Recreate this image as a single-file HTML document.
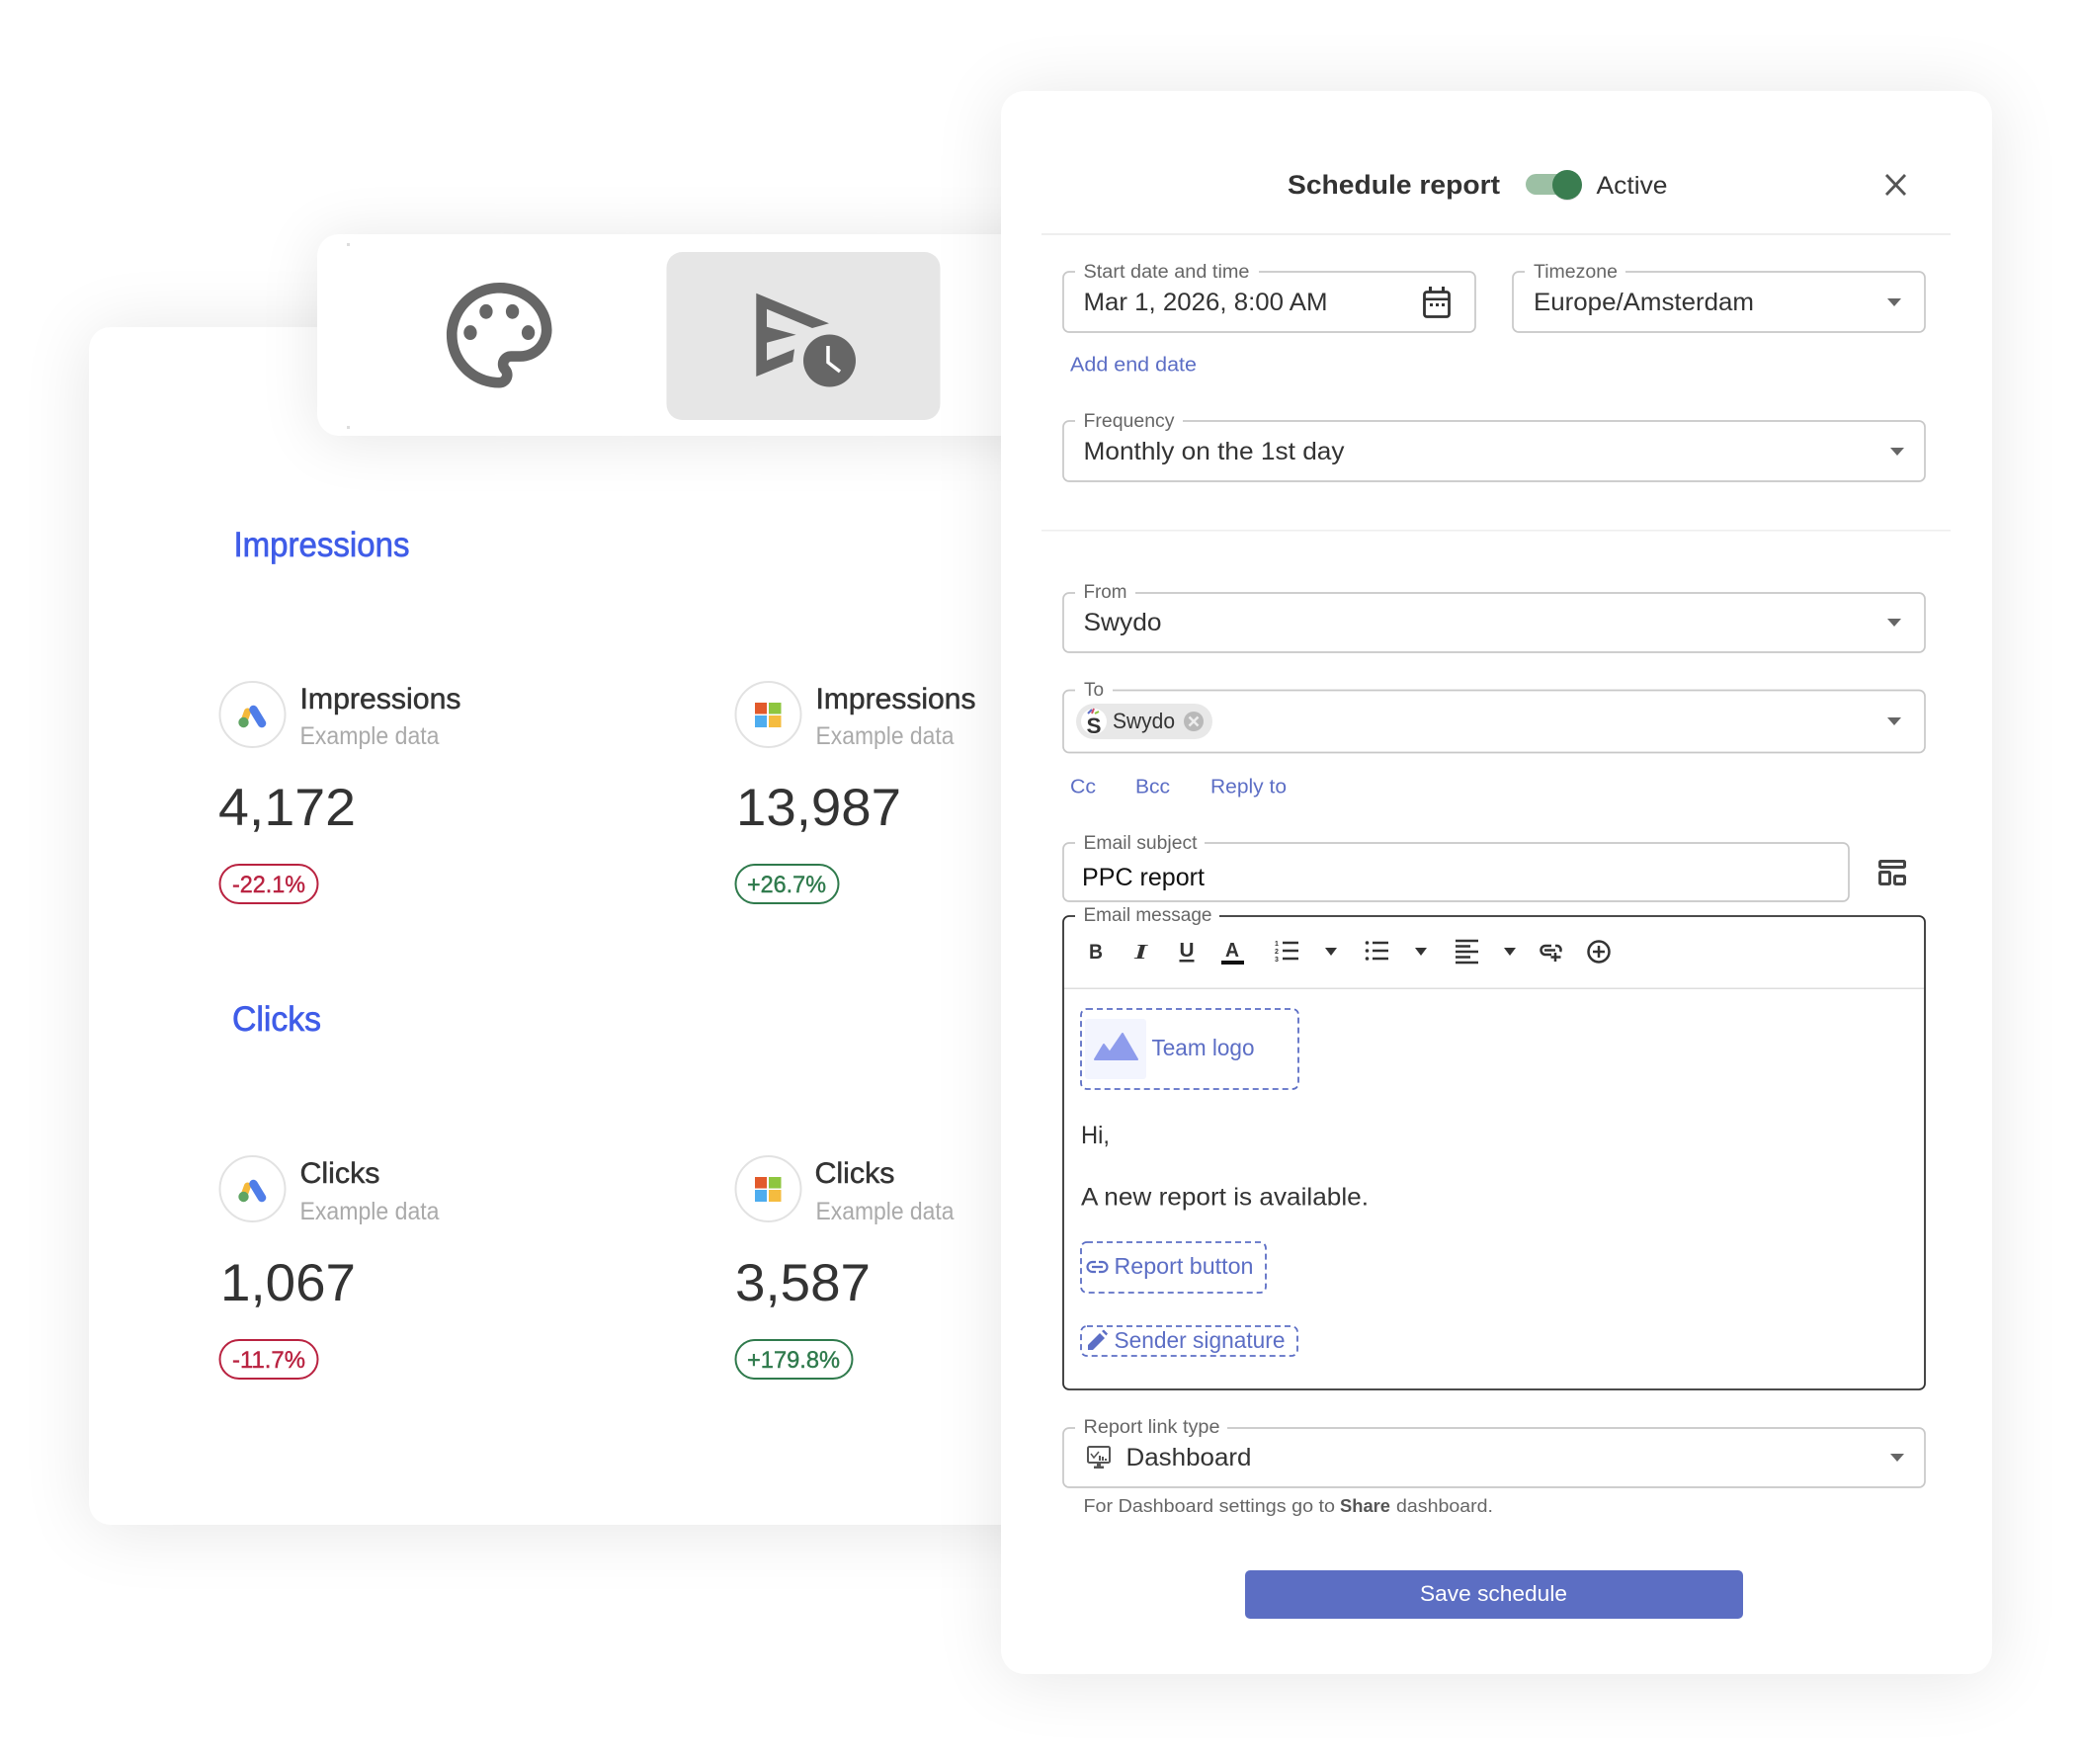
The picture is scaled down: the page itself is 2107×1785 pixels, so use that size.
<!DOCTYPE html>
<html lang="en">
<head>
<meta charset="utf-8">
<title>Schedule report</title>
<style>
html,body{margin:0;padding:0;background:#fff;width:2107px;height:1785px;overflow:hidden}
.c{position:absolute;background:#fff}
svg{position:absolute;left:0;top:0}
text{font-family:"Liberation Sans",sans-serif;fill:#333}
.lab{font-size:19px;fill:#666}
.val{font-size:25px;fill:#333}
.lnk{font-size:20px;fill:#5c6ec5}
.ph{font-size:23px;fill:#5c6ec5}
.h{font-size:35px;fill:#3f5ce8;stroke:#3f5ce8;stroke-width:.7px}
.it{font-size:30px;fill:#333;stroke:#333;stroke-width:.5px}
.ex{font-size:25px;fill:#aaa}
.num{font-size:53px;fill:#333}
.red{font-size:24px;fill:#b92240;stroke:#b92240;stroke-width:.4px}
.grn{font-size:24px;fill:#2f7a4c;stroke:#2f7a4c;stroke-width:.4px}
.f{fill:none;stroke:#c8c8c8;stroke-width:1.7}
.w{fill:#fff}
.d{fill:none;stroke:#5c6ec5;stroke-width:1.8;stroke-dasharray:6 4}
.ar{fill:#666}
.tl{stroke:#333;stroke-width:2.5;fill:none}
</style>
</head>
<body>
<div class="c" style="left:90px;top:331px;width:1100px;height:1212px;border-radius:22px;box-shadow:0 4px 70px rgba(0,0,0,.1)"></div>
<div class="c" style="left:321px;top:237px;width:800px;height:204px;border-radius:22px;box-shadow:0 4px 60px rgba(0,0,0,.1)"></div>
<div class="c" style="left:1013px;top:92px;width:1003px;height:1602px;border-radius:24px;box-shadow:0 4px 70px rgba(0,0,0,.1)"></div>

<svg width="2107" height="1785" viewBox="0 0 2107 1785" xmlns="http://www.w3.org/2000/svg">
<!-- toolbar -->
<rect x="351" y="246" width="3" height="3" fill="#ddd"/>
<rect x="351" y="431" width="3" height="3" fill="#ddd"/>
<rect x="674.500" y="255" width="277" height="170" rx="16" fill="#e6e6e6"/>
<g transform="translate(441.3 275.3) scale(5.33)" fill="#666">
<path d="M12 22C6.49 22 2 17.51 2 12S6.49 2 12 2s10 4.04 10 9c0 3.31-2.69 6-6 6h-1.77c-.28 0-.5.22-.5.5 0 .12.05.23.13.33.41.47.64 1.06.64 1.67 0 1.38-1.12 2.5-2.5 2.5zm0-18c-4.41 0-8 3.59-8 8s3.59 8 8 8c.28 0 .5-.22.5-.5 0-.16-.08-.28-.14-.35-.41-.46-.63-1.05-.63-1.65 0-1.38 1.12-2.5 2.5-2.5H16c2.21 0 4-1.79 4-4 0-3.86-3.59-7-8-7z"/>
<ellipse cx="6.5" cy="11.5" rx="1.25" ry="1.4"/><ellipse cx="9.5" cy="7.5" rx="1.25" ry="1.4"/><ellipse cx="14.5" cy="7.5" rx="1.25" ry="1.4"/><ellipse cx="17.5" cy="11.5" rx="1.25" ry="1.4"/>
</g>
<path fill="#666" d="M765.3 296.7L839 327.3L822 332L776 312.7V330.7L805.6 338.7L776 346.700V364.7L804 353.3L802.2 366L765.3 381Z"/>
<circle cx="839.5" cy="365" r="26.5" fill="#666"/>
<path d="M838 350V366.7L850 376" fill="none" stroke="#fff" stroke-width="3.500"/>

<!-- left content -->
<text class="h" x="236.500" y="563" textLength="178" lengthAdjust="spacingAndGlyphs">Impressions</text>
<text class="h" x="235" y="1043" textLength="90" lengthAdjust="spacingAndGlyphs">Clicks</text>

<g>
<circle cx="255.5" cy="723" r="33" fill="#fff" stroke="#e2e2e2" stroke-width="2"/>
<line x1="250.500" y1="720" x2="246.500" y2="731" stroke="#f5b93a" stroke-width="7" stroke-linecap="round"/>
<line x1="256.500" y1="718" x2="265" y2="732" stroke="#4f7de8" stroke-width="8.500" stroke-linecap="round"/>
<circle cx="246.5" cy="731" r="5.2" fill="#5fa463"/>
</g>
<g>
<circle cx="777.5" cy="723" r="33" fill="#fff" stroke="#e2e2e2" stroke-width="2"/>
<rect x="764" y="711" width="12" height="11.500" fill="#e25a2b"/>
<rect x="778" y="711" width="12.500" height="11.500" fill="#8ec63f"/>
<rect x="764" y="724" width="12" height="12" fill="#4eadef"/>
<rect x="778" y="724" width="12.500" height="12" fill="#f5bc3f"/>
</g>
<g transform="translate(0 480)">
<circle cx="255.5" cy="723" r="33" fill="#fff" stroke="#e2e2e2" stroke-width="2"/>
<line x1="250.500" y1="720" x2="246.500" y2="731" stroke="#f5b93a" stroke-width="7" stroke-linecap="round"/>
<line x1="256.500" y1="718" x2="265" y2="732" stroke="#4f7de8" stroke-width="8.500" stroke-linecap="round"/>
<circle cx="246.5" cy="731" r="5.2" fill="#5fa463"/>
<circle cx="777.5" cy="723" r="33" fill="#fff" stroke="#e2e2e2" stroke-width="2"/>
<rect x="764" y="711" width="12" height="11.500" fill="#e25a2b"/>
<rect x="778" y="711" width="12.500" height="11.500" fill="#8ec63f"/>
<rect x="764" y="724" width="12" height="12" fill="#4eadef"/>
<rect x="778" y="724" width="12.500" height="12" fill="#f5bc3f"/>
</g>

<text class="it" x="303.500" y="717" textLength="163" lengthAdjust="spacingAndGlyphs">Impressions</text>
<text class="ex" x="303.500" y="753" textLength="141" lengthAdjust="spacingAndGlyphs">Example data</text>
<text class="num" x="221" y="835" textLength="139" lengthAdjust="spacingAndGlyphs">4,172</text>
<rect x="222.500" y="875" width="99" height="39" rx="19.500" fill="none" stroke="#b92240" stroke-width="2"/>
<text class="red" x="235" y="903" textLength="74" lengthAdjust="spacingAndGlyphs">-22.1%</text>

<text class="it" x="825.500" y="717" textLength="162" lengthAdjust="spacingAndGlyphs">Impressions</text>
<text class="ex" x="825.500" y="753" textLength="140" lengthAdjust="spacingAndGlyphs">Example data</text>
<text class="num" x="745" y="835" textLength="167" lengthAdjust="spacingAndGlyphs">13,987</text>
<rect x="744.500" y="875" width="104" height="39" rx="19.500" fill="none" stroke="#2f7a4c" stroke-width="2"/>
<text class="grn" x="756" y="903" textLength="80" lengthAdjust="spacingAndGlyphs">+26.7%</text>

<text class="it" x="303.500" y="1197" textLength="81" lengthAdjust="spacingAndGlyphs">Clicks</text>
<text class="ex" x="303.500" y="1234" textLength="141" lengthAdjust="spacingAndGlyphs">Example data</text>
<text class="num" x="223" y="1316" textLength="137" lengthAdjust="spacingAndGlyphs">1,067</text>
<rect x="222.500" y="1356" width="99" height="39" rx="19.500" fill="none" stroke="#b92240" stroke-width="2"/>
<text class="red" x="235" y="1384" textLength="74" lengthAdjust="spacingAndGlyphs">-11.7%</text>

<text class="it" x="824.500" y="1197" textLength="81" lengthAdjust="spacingAndGlyphs">Clicks</text>
<text class="ex" x="825.500" y="1234" textLength="140" lengthAdjust="spacingAndGlyphs">Example data</text>
<text class="num" x="744" y="1316" textLength="137" lengthAdjust="spacingAndGlyphs">3,587</text>
<rect x="744.500" y="1356" width="118" height="39" rx="19.500" fill="none" stroke="#2f7a4c" stroke-width="2"/>
<text class="grn" x="756" y="1384" textLength="94" lengthAdjust="spacingAndGlyphs">+179.8%</text>

<!-- modal header -->
<text x="1303" y="196" font-size="27" font-weight="700" textLength="215" lengthAdjust="spacingAndGlyphs">Schedule report</text>
<rect x="1544" y="176" width="50" height="21" rx="10.500" fill="#9cc0a4"/>
<circle cx="1586" cy="188" r="15" fill="#000" opacity=".12"/>
<circle cx="1586" cy="187" r="15" fill="#3a7d50"/>
<text x="1615.500" y="196" font-size="25" textLength="72" lengthAdjust="spacingAndGlyphs">Active</text>
<path d="M1909 177L1928 197M1928 177L1909 197" stroke="#555" stroke-width="2.800" fill="none"/>
<rect x="1054" y="236" width="920" height="2" fill="#eee"/>

<!-- date fields -->
<rect class="f" x="1076" y="275" width="417" height="61" rx="6"/>
<rect class="w" x="1088" y="270" width="186" height="10"/>
<text class="lab" x="1096.500" y="281" textLength="168" lengthAdjust="spacingAndGlyphs">Start date and time</text>
<text class="val" x="1096.500" y="314" textLength="247" lengthAdjust="spacingAndGlyphs">Mar 1, 2026, 8:00 AM</text>
<g>
<rect x="1441.500" y="295.500" width="25" height="25" rx="2.500" fill="none" stroke="#333" stroke-width="2.800"/>
<rect x="1441" y="301.500" width="26" height="2.500" fill="#333"/>
<rect x="1446" y="290" width="3" height="6" fill="#333"/>
<rect x="1459" y="290" width="3" height="6" fill="#333"/>
<rect x="1447" y="307" width="3" height="3" fill="#333"/>
<rect x="1453" y="307" width="3" height="3" fill="#333"/>
<rect x="1459" y="307" width="3" height="3" fill="#333"/>
</g>

<rect class="f" x="1531" y="275" width="417" height="61" rx="6"/>
<rect class="w" x="1543" y="270" width="102" height="10"/>
<text class="lab" x="1552" y="281" textLength="85" lengthAdjust="spacingAndGlyphs">Timezone</text>
<text class="val" x="1552" y="314" textLength="223" lengthAdjust="spacingAndGlyphs">Europe/Amsterdam</text>
<path class="ar" d="M1910 302H1924L1917 310Z"/>

<text class="lnk" x="1083" y="375.500" textLength="128" lengthAdjust="spacingAndGlyphs">Add end date</text>

<rect class="f" x="1076" y="426" width="872" height="61" rx="6"/>
<rect class="w" x="1088" y="421" width="109" height="10"/>
<text class="lab" x="1096.500" y="432" textLength="92" lengthAdjust="spacingAndGlyphs">Frequency</text>
<text class="val" x="1096.500" y="465" textLength="264" lengthAdjust="spacingAndGlyphs">Monthly on the 1st day</text>
<path class="ar" d="M1913 453H1927L1920 461Z"/>

<rect x="1054" y="536" width="920" height="1.500" fill="#eee"/>

<!-- from -->
<rect class="f" x="1076" y="600" width="872" height="60" rx="6"/>
<rect class="w" x="1088" y="595" width="61" height="10"/>
<text class="lab" x="1096.500" y="605" textLength="44" lengthAdjust="spacingAndGlyphs">From</text>
<text class="val" x="1096.500" y="638" textLength="79" lengthAdjust="spacingAndGlyphs">Swydo</text>
<path class="ar" d="M1910 626H1924L1917 634Z"/>

<!-- to -->
<rect class="f" x="1076" y="698.500" width="872" height="63" rx="6"/>
<rect class="w" x="1088" y="693" width="38" height="10"/>
<text class="lab" x="1097" y="704" textLength="20" lengthAdjust="spacingAndGlyphs">To</text>
<rect x="1089" y="712" width="138" height="36" rx="18" fill="#e8e8e8"/>
<circle cx="1107" cy="730" r="13" fill="#fff"/>
<text x="1099.500" y="742" font-size="22" font-weight="700" textLength="15" lengthAdjust="spacingAndGlyphs">S</text>
<path d="M1101 722L1105 718" stroke="#5c6ec5" stroke-width="2"/><path d="M1105 722L1107 717" stroke="#d0506a" stroke-width="2"/><path d="M1108 722L1112 720" stroke="#8ec63f" stroke-width="2"/>
<text x="1126" y="737" font-size="22" textLength="63" lengthAdjust="spacingAndGlyphs">Swydo</text>
<circle cx="1208" cy="730" r="10" fill="#b9b9b9"/>
<path d="M1203.500 725.500L1212.500 734.500M1212.500 725.500L1203.500 734.500" stroke="#eee" stroke-width="2.500"/>
<path class="ar" d="M1910 726H1924L1917 734Z"/>

<text class="lnk" x="1083" y="802.500" textLength="26" lengthAdjust="spacingAndGlyphs">Cc</text>
<text class="lnk" x="1149" y="802.500" textLength="35" lengthAdjust="spacingAndGlyphs">Bcc</text>
<text class="lnk" x="1225" y="802.500" textLength="77" lengthAdjust="spacingAndGlyphs">Reply to</text>

<!-- subject -->
<rect class="f" x="1076" y="853" width="795" height="59" rx="6"/>
<rect class="w" x="1088" y="848" width="131" height="10"/>
<text class="lab" x="1096.500" y="859" textLength="115" lengthAdjust="spacingAndGlyphs">Email subject</text>
<text x="1095" y="896" font-size="25" style="fill:#111" textLength="124" lengthAdjust="spacingAndGlyphs">PPC report</text>
<g fill="none" stroke="#444" stroke-width="3">
<rect x="1902.500" y="871.500" width="25" height="6" rx="1"/>
<rect x="1902.500" y="882.500" width="10" height="12" rx="1"/>
<rect x="1917.500" y="886.500" width="10" height="8" rx="1"/>
</g>

<!-- email message -->
<rect x="1076" y="927" width="872" height="479" rx="6" fill="none" stroke="#333" stroke-width="1.800"/>
<rect class="w" x="1088" y="920" width="146" height="12"/>
<text class="lab" x="1096.500" y="932" textLength="130" lengthAdjust="spacingAndGlyphs">Email message</text>
<rect x="1077" y="999.500" width="870" height="1.500" fill="#ddd"/>

<text x="1102" y="970" font-size="21" font-weight="700" textLength="14" lengthAdjust="spacingAndGlyphs">B</text>
<text x="1148" y="970" font-size="21" font-weight="700" font-style="italic" style="font-family:'Liberation Serif',serif" textLength="13" lengthAdjust="spacingAndGlyphs">I</text>
<text x="1193.500" y="968" font-size="20" font-weight="700" textLength="15" lengthAdjust="spacingAndGlyphs">U</text>
<rect x="1193.500" y="971" width="15" height="2.500" fill="#333"/>
<text x="1240" y="968" font-size="20" font-weight="700" textLength="14" lengthAdjust="spacingAndGlyphs">A</text>
<rect x="1236" y="972" width="23" height="4" fill="#111"/>

<path class="tl" d="M1298 954H1314M1298 962H1314M1298 970H1314"/>
<text x="1290" y="957" font-size="7" font-weight="700">1</text><text x="1290" y="965" font-size="7" font-weight="700">2</text><text x="1290" y="973" font-size="7" font-weight="700">3</text>
<path d="M1341 959H1353L1347 967Z" fill="#333"/>
<path class="tl" d="M1389 954H1405M1389 962H1405M1389 970H1405"/>
<circle cx="1383.500" cy="954" r="1.800" fill="#333"/><circle cx="1383.500" cy="962" r="1.800" fill="#333"/><circle cx="1383.500" cy="970" r="1.800" fill="#333"/>
<path d="M1432 959H1444L1438 967Z" fill="#333"/>
<path class="tl" d="M1473 952H1496M1473 957.500H1488M1473 963H1496M1473 968.500H1488M1473 974H1496"/>
<path d="M1522 959H1534L1528 967Z" fill="#333"/>
<path class="tl" d="M1570 957H1564A4.500 4.500 0 0 0 1564 966H1570M1574 957H1576A4 4 0 0 1 1579 963M1563 961.500H1574"/>
<path class="tl" d="M1574 964V973M1569.500 968.500H1579.500"/>
<circle cx="1618" cy="963" r="10.500" class="tl"/>
<path class="tl" d="M1618 957V969M1612 963H1624"/>

<!-- team logo -->
<rect class="d" x="1094" y="1021" width="220" height="81" rx="6"/>
<rect x="1098" y="1031" width="62" height="61" rx="3" fill="#f3f5fe"/>
<path d="M1108 1072L1117 1057L1123 1065L1136 1046L1151 1072Z" fill="#8e9cec" stroke="#8e9cec" stroke-width="2" stroke-linejoin="round"/>
<text class="ph" x="1165.500" y="1068" textLength="104" lengthAdjust="spacingAndGlyphs">Team logo</text>

<text class="val" x="1094" y="1157" textLength="29" lengthAdjust="spacingAndGlyphs">Hi,</text>
<text class="val" x="1094" y="1219.500" textLength="291" lengthAdjust="spacingAndGlyphs">A new report is available.</text>

<rect class="d" x="1094" y="1257" width="187" height="51" rx="6"/>
<path d="M1109 1277H1105.500A5 5 0 0 0 1105.500 1287H1109M1112 1277H1115.500A5 5 0 0 1 1115.500 1287H1112M1105 1282H1116" fill="none" stroke="#5c6ec5" stroke-width="2.200"/>
<text class="ph" x="1127.500" y="1289" textLength="141" lengthAdjust="spacingAndGlyphs">Report button</text>

<rect class="d" x="1094" y="1342" width="219" height="30" rx="6"/>
<path d="M1101 1366V1361L1113 1349L1118 1354L1106 1366ZM1115 1347L1117 1345.500L1121 1349.500L1119.500 1351.500Z" fill="#5c6ec5"/>
<text class="ph" x="1127.500" y="1364" textLength="173" lengthAdjust="spacingAndGlyphs">Sender signature</text>

<!-- link type -->
<rect class="f" x="1076" y="1445" width="872" height="60" rx="6"/>
<rect class="w" x="1088" y="1440" width="154" height="10"/>
<text class="lab" x="1096.500" y="1450" textLength="138" lengthAdjust="spacingAndGlyphs">Report link type</text>
<g>
<rect x="1101" y="1464" width="22" height="16" rx="1.500" fill="none" stroke="#555" stroke-width="2"/>
<path d="M1104 1471L1107 1475L1112 1469" fill="none" stroke="#555" stroke-width="1.500"/>
<path d="M1113 1473v5M1116 1474v4M1119 1476v2" stroke="#555" stroke-width="2"/>
<path d="M1110 1481H1114V1483.500H1117V1486H1107V1483.500H1110Z" fill="#555"/>
</g>
<text class="val" x="1139.500" y="1483" textLength="127" lengthAdjust="spacingAndGlyphs">Dashboard</text>
<path class="ar" d="M1913 1471H1927L1920 1479Z"/>
<text x="1096.500" y="1530" font-size="18" style="fill:#666" textLength="254.500" lengthAdjust="spacingAndGlyphs">For Dashboard settings go to</text>
<text x="1356" y="1530" font-size="18" font-weight="700" style="fill:#555" textLength="51" lengthAdjust="spacingAndGlyphs">Share</text>
<text x="1413" y="1530" font-size="18" style="fill:#666" textLength="98" lengthAdjust="spacingAndGlyphs">dashboard.</text>

<!-- button -->
<rect x="1260" y="1589" width="504" height="49" rx="5" fill="#5c6ec3"/>
<text x="1437" y="1620" font-size="22" style="fill:#fff" textLength="149" lengthAdjust="spacingAndGlyphs">Save schedule</text>
</svg>
</body>
</html>
